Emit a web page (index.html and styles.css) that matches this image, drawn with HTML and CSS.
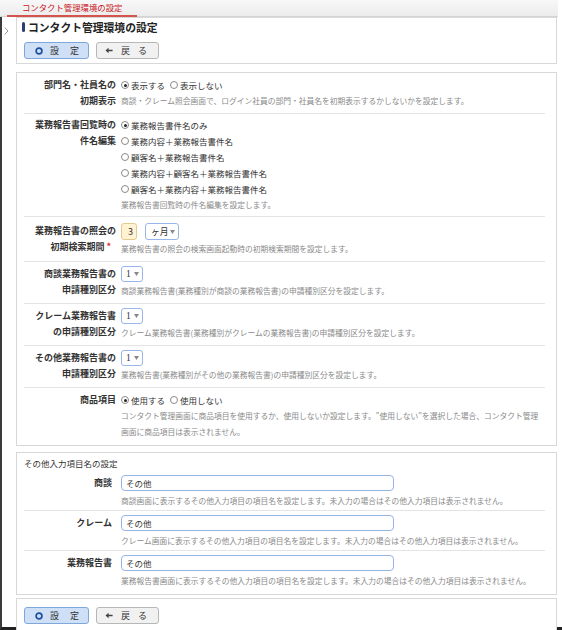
FILE: index.html
```html
<!DOCTYPE html>
<html lang="ja">
<head>
<meta charset="utf-8">
<title>コンタクト管理環境の設定</title>
<link rel="stylesheet" href="styles.css">
</head>
<body>
<div class="tabbar"><div class="tab">コンタクト管理環境の設定</div></div>
<div class="main">
  <div class="side">
    <svg class="chev" width="5" height="8" viewBox="0 0 5 8"><path d="M0.8 0.6 L4 4 L0.8 7.4" fill="none" stroke="#999" stroke-width="1"/></svg>
  </div>
  <div class="content">
    <div class="box head">
      <h1 class="title"><span class="mark"></span>コンタクト管理環境の設定</h1>
      <div class="btns">
        <span class="btn primary"><svg class="ico" width="8" height="8" viewBox="0 0 8 8"><circle cx="4" cy="4" r="2.9" fill="none" stroke="#1f4f9f" stroke-width="1.7"/></svg><span class="bt">設定</span></span>
        <span class="btn back"><svg class="ico" width="8" height="7" viewBox="0 0 8 7"><path d="M0.5 3.5 L3.6 0.8 V2.8 H7.6 V4.2 H3.6 V6.2 Z" fill="#444"/></svg><span class="bt">戻る</span></span>
      </div>
    </div>

    <div class="box form">
      <div class="row">
        <div class="lbl"><div>部門名・社員名の</div><div>初期表示</div></div>
        <div class="val">
          <div class="line"><span class="opt"><span class="radio on"></span>表示する</span><span class="opt"><span class="radio"></span>表示しない</span></div>
          <div class="desc">商談・クレーム照会画面で、ログイン社員の部門・社員名を初期表示するかしないかを設定します。</div>
        </div>
      </div>
      <div class="row tight">
        <div class="lbl"><div>業務報告書回覧時の</div><div>件名編集</div></div>
        <div class="val">
          <div class="line"><span class="opt"><span class="radio on"></span>業務報告書件名のみ</span></div>
          <div class="line"><span class="opt"><span class="radio"></span>業務内容＋業務報告書件名</span></div>
          <div class="line"><span class="opt"><span class="radio"></span>顧客名＋業務報告書件名</span></div>
          <div class="line"><span class="opt"><span class="radio"></span>業務内容＋顧客名＋業務報告書件名</span></div>
          <div class="line"><span class="opt"><span class="radio"></span>顧客名＋業務内容＋業務報告書件名</span></div>
          <div class="desc">業務報告書回覧時の件名編集を設定します。</div>
        </div>
      </div>
      <div class="row period">
        <div class="lbl"><div>業務報告書の照会の</div><div class="reqline">初期検索期間 <span class="req">*</span></div></div>
        <div class="val">
          <div class="ctl"><span class="num">3</span><span class="sel wide">ヶ月<svg class="tri" width="5" height="4" viewBox="0 0 5 4"><path d="M0 0 H5 L2.5 4 Z" fill="#888"/></svg></span></div>
          <div class="desc">業務報告書の照会の検索画面起動時の初期検索期間を設定します。</div>
        </div>
      </div>
      <div class="row">
        <div class="lbl"><div>商談業務報告書の</div><div>申請種別区分</div></div>
        <div class="val">
          <div class="ctl"><span class="sel">1<svg class="tri" width="5" height="4" viewBox="0 0 5 4"><path d="M0 0 H5 L2.5 4 Z" fill="#888"/></svg></span></div>
          <div class="desc">商談業務報告書(業務種別が商談の業務報告書)の申請種別区分を設定します。</div>
        </div>
      </div>
      <div class="row">
        <div class="lbl"><div>クレーム業務報告書</div><div>の申請種別区分</div></div>
        <div class="val">
          <div class="ctl"><span class="sel">1<svg class="tri" width="5" height="4" viewBox="0 0 5 4"><path d="M0 0 H5 L2.5 4 Z" fill="#888"/></svg></span></div>
          <div class="desc">クレーム業務報告書(業務種別がクレームの業務報告書)の申請種別区分を設定します。</div>
        </div>
      </div>
      <div class="row">
        <div class="lbl"><div>その他業務報告書の</div><div>申請種別区分</div></div>
        <div class="val">
          <div class="ctl"><span class="sel">1<svg class="tri" width="5" height="4" viewBox="0 0 5 4"><path d="M0 0 H5 L2.5 4 Z" fill="#888"/></svg></span></div>
          <div class="desc">業務報告書(業務種別がその他の業務報告書)の申請種別区分を設定します。</div>
        </div>
      </div>
      <div class="row last">
        <div class="lbl"><div>商品項目</div></div>
        <div class="val">
          <div class="line"><span class="opt"><span class="radio on"></span>使用する</span><span class="opt"><span class="radio"></span>使用しない</span></div>
          <div class="desc">コンタクト管理画面に商品項目を使用するか、使用しないか設定します。"使用しない"を選択した場合、コンタクト管理<br>画面に商品項目は表示されません。</div>
        </div>
      </div>
    </div>

    <div class="box other">
      <div class="sub">その他入力項目名の設定</div>
      <div class="row r2">
        <div class="lbl"><div>商談</div></div>
        <div class="val">
          <div class="ctl"><span class="txt">その他</span></div>
          <div class="desc">商談画面に表示するその他入力項目の項目名を設定します。未入力の場合はその他入力項目は表示されません。</div>
        </div>
      </div>
      <div class="row r2">
        <div class="lbl"><div>クレーム</div></div>
        <div class="val">
          <div class="ctl"><span class="txt">その他</span></div>
          <div class="desc">クレーム画面に表示するその他入力項目の項目名を設定します。未入力の場合はその他入力項目は表示されません。</div>
        </div>
      </div>
      <div class="row r2 last">
        <div class="lbl"><div>業務報告書</div></div>
        <div class="val">
          <div class="ctl"><span class="txt">その他</span></div>
          <div class="desc">業務報告書画面に表示するその他入力項目の項目名を設定します。未入力の場合はその他入力項目は表示されません。</div>
        </div>
      </div>
    </div>

    <div class="box foot">
      <div class="btns">
        <span class="btn primary"><svg class="ico" width="8" height="8" viewBox="0 0 8 8"><circle cx="4" cy="4" r="2.9" fill="none" stroke="#1f4f9f" stroke-width="1.7"/></svg><span class="bt">設定</span></span>
        <span class="btn back"><svg class="ico" width="8" height="7" viewBox="0 0 8 7"><path d="M0.5 3.5 L3.6 0.8 V2.8 H7.6 V4.2 H3.6 V6.2 Z" fill="#444"/></svg><span class="bt">戻る</span></span>
      </div>
    </div>
  </div>
</div>
</body>
</html>
```

FILE: styles.css
```css
html, body {
  margin: 0;
  padding: 0;
  height: 630px;
  overflow: hidden;
  background: #fff;
}
body {
  font-family: "Noto Sans CJK JP", "Noto Sans", sans-serif;
  color: #333;
  font-size: 9px;
}
.tabbar {
  height: 17px;
  box-sizing: border-box;
  background: linear-gradient(#f8f8f8, #ececec);
  border-bottom: 1px solid #d4d4d4;
  padding-left: 7px;
  width: 558px;
}
.tab {
  width: 130px;
  height: 17px;
  box-sizing: border-box;
  border-bottom: 2px solid #d6524f;
  color: #c8161d;
  font-size: 8.4px;
  line-height: 14px;
  padding-left: 15px;
  white-space: nowrap;
}
.main {
  display: flex;
  height: 613px;
  box-sizing: border-box;
  border-left: 2px solid #3a3a3a;
  border-bottom: 3px solid #222;
}
.side {
  width: 14px;
  flex: none;
}
.chev {
  display: block;
  margin: 10px 0 0 2px;
}
.content {
  width: 541px;
  display: flex;
  flex-direction: column;
}
.box {
  border: 1px solid #d8d8d8;
  background: #fff;
  box-sizing: border-box;
}
.head {
  padding: 1px 0 4px 5px;
}
.title {
  margin: 0;
  font-size: 10.8px;
  font-weight: bold;
  line-height: 16px;
  color: #222;
  display: flex;
  align-items: center;
  white-space: nowrap;
}
.mark {
  width: 3px;
  height: 10px;
  border-radius: 2px;
  background: #2b3f73;
  margin-right: 3px;
}
.btns {
  display: flex;
  gap: 7px;
  margin-top: 7px;
}
.head .btns { margin-left: 2px; }
.btn {
  display: inline-flex;
  align-items: center;
  flex: none;
  height: 17px;
  box-sizing: border-box;
  border-radius: 3px;
  font-size: 9px;
  color: #333;
  white-space: nowrap;
  overflow: visible;
}
.btn.primary {
  width: 65px;
  background: #cfe0f6;
  border: 1px solid #7ea7de;
  padding-left: 10px;
}
.btn.primary .bt {
  margin-left: 7px;
  letter-spacing: 11px;
  flex: none;
}
.btn.back {
  width: 63px;
  background: #f1f1f1;
  border: 1px solid #b7b7b7;
  padding-left: 8px;
}
.btn.back .bt {
  margin-left: 8px;
  letter-spacing: 8px;
  flex: none;
}
.ico { display: block; flex: none; }

.form {
  margin-top: 8px;
  padding: 0 0 1px;
}
.row {
  display: flex;
  margin: 0 11px 0 7px;
  padding: 4px 0;
  border-bottom: 1px solid #e4e4e4;
}
.row.tight { padding: 3px 0; }
.row.period { padding-top: 6px; }
.row.last { border-bottom: none; }
.lbl {
  width: 92px;
  flex: none;
  text-align: right;
  font-weight: bold;
  font-size: 9px;
  line-height: 16px;
  color: #333;
  white-space: nowrap;
}
.reqline { padding-right: 5px; }
.req { color: #e0201b; }
.val {
  margin-left: 5px;
  flex: 1;
  min-width: 0;
}
.line {
  display: flex;
  align-items: center;
  height: 16px;
  font-size: 8.5px;
  white-space: nowrap;
}
.opt {
  display: inline-flex;
  align-items: center;
  margin-right: 5px;
}
.radio {
  width: 8px;
  height: 8px;
  box-sizing: border-box;
  border: 1px solid #8a8a8a;
  border-radius: 50%;
  margin-right: 2px;
  position: relative;
  background: #fff;
}
.radio.on::after {
  content: "";
  position: absolute;
  left: 1.5px;
  top: 1.5px;
  width: 3px;
  height: 3px;
  border-radius: 50%;
  background: #222;
}
.desc {
  font-size: 7.75px;
  line-height: 16px;
  color: #8a8a8a;
  white-space: nowrap;
}
.ctl {
  display: flex;
  align-items: center;
  gap: 8px;
  margin-bottom: 1px;
}
.num {
  width: 16px;
  height: 17px;
  box-sizing: border-box;
  background: #fff3d4;
  border: 1px solid #e6c98e;
  border-radius: 3px;
  font-size: 9px;
  line-height: 15px;
  text-align: right;
  padding-right: 3px;
}
.sel {
  display: inline-flex;
  align-items: center;
  justify-content: space-between;
  width: 22px;
  height: 16px;
  box-sizing: border-box;
  border: 1px solid #98b6ea;
  border-radius: 3px;
  padding: 0 3px 0 4px;
  font-size: 9.5px;
  font-family: "Liberation Serif", "Noto Sans CJK JP", serif;
  background: #fff;
}
.sel.wide {
  width: 34px;
  height: 17px;
  font-family: "Noto Sans CJK JP", sans-serif;
  font-size: 8.8px;
  padding-left: 5px;
}
.tri { display: block; }
.other {
  margin-top: 6px;
  padding: 2px 0 1px;
}
.sub {
  margin-left: 7px;
  font-size: 8.5px;
  line-height: 16px;
  color: #333;
}
.row.r2 { padding: 4px 0 1px; }
.row.r2.last { padding-bottom: 4px; }
.row.r2 .lbl { width: 88px; }
.row.r2 .val { margin-left: 9px; }
.row.r2 .ctl { margin-bottom: 2px; }
.txt {
  display: block;
  width: 273px;
  height: 16px;
  box-sizing: border-box;
  border: 1px solid #94b4e8;
  border-radius: 4px;
  padding-left: 4px;
  font-size: 8.5px;
  line-height: 14px;
  color: #333;
}
.foot {
  margin-top: 3px;
  padding: 0 0 10px 7px;
  flex: 1;
}
.foot .btns { margin-top: 8px; }
```
